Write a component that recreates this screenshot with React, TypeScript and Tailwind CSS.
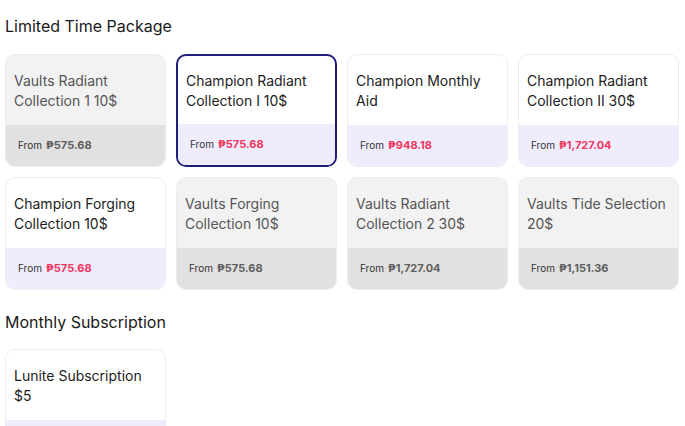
import clsx from 'clsx'

type Pack = {
  name: string
  price?: string
  disabled?: boolean
  selected?: boolean
}

const limited: Pack[] = [
  { name: 'Vaults Radiant Collection 1 10$', price: '₱575.68', disabled: true },
  { name: 'Champion Radiant Collection I 10$', price: '₱575.68', selected: true },
  { name: 'Champion Monthly Aid', price: '₱948.18' },
  { name: 'Champion Radiant Collection II 30$', price: '₱1,727.04' },
  { name: 'Champion Forging Collection 10$', price: '₱575.68' },
  { name: 'Vaults Forging Collection 10$', price: '₱575.68', disabled: true },
  { name: 'Vaults Radiant Collection 2 30$', price: '₱1,727.04', disabled: true },
  { name: 'Vaults Tide Selection 20$', price: '₱1,151.36', disabled: true },
]

const PackCard = ({ pack }: { pack: Pack }) => {
  return (
    <div
      className={clsx(
        'w-[161px] h-[113px] rounded-[10px] overflow-hidden flex flex-col',
        pack.selected ? 'border-2 border-[#1f1c7c]' : 'border border-[#ededf0]',
        pack.disabled ? 'bg-[#f2f2f2]' : 'bg-white',
      )}
    >
      <div
        className={clsx(
          'flex-1 pr-2 text-[14px] leading-5',
          pack.selected ? 'pt-[15px] pl-[8px]' : 'pt-[16px] pl-[8px]',
          pack.disabled ? 'text-[#555]' : 'text-[#1c1c1c]',
        )}
      >
        {pack.name}
      </div>
      <div
        className={clsx(
          'h-[41px] flex items-center gap-1 pl-[12px]',
          pack.disabled ? 'bg-[#e1e1e1]' : 'bg-[#eeecfd]',
        )}
      >
        {pack.price && (
          <>
            <span className="text-[10px] text-[#333]">From</span>
            <span
              className={clsx(
                'text-[11px] font-bold',
                pack.disabled ? 'text-[#5e5e5e]' : 'text-[#f0365c]',
              )}
            >
              {pack.price}
            </span>
          </>
        )}
      </div>
    </div>
  )
}

export default function App() {
  return (
    <div
      className="w-[685px] h-[426px] overflow-hidden bg-white pl-[5px] pt-[14px]"
      style={{ fontFamily: 'Inter, "Noto Sans", sans-serif' }}
    >
      <h2 className="text-[16px] leading-6 text-[#1a1a1a]">Limited Time Package</h2>
      <div className="mt-4 grid grid-cols-[repeat(4,161px)] gap-[10px]">
        {limited.map((p) => (
          <PackCard key={p.name} pack={p} />
        ))}
      </div>
      <h2 className="mt-[20px] text-[16px] leading-6 text-[#1a1a1a]">Monthly Subscription</h2>
      <div className="mt-[15px]">
        {/* price row falls below the fold in the screenshot */}
        <PackCard pack={{ name: 'Lunite Subscription $5' }} />
      </div>
    </div>
  )
}
